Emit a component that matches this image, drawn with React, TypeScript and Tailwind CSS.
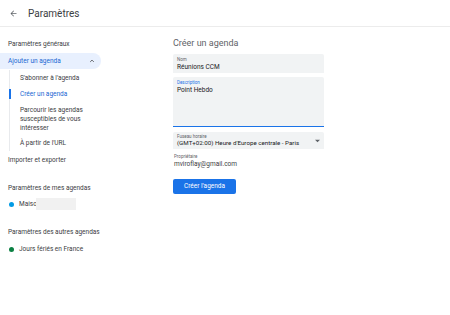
import React from "react";

export default function App() {
  const font = { fontFamily: "Roboto, 'Noto Sans', Arial, sans-serif" };
  return (
    <div className="w-[450px] h-[315px] bg-white text-[#3c4043] overflow-hidden" style={font}>
      <div className="h-[27px] border-b border-[#ececec] flex items-center pt-[1px]">
        <svg className="ml-[9px]" width="9" height="9" viewBox="0 0 24 24">
          <path d="M20 11H7.83l5.59-5.59L12 4l-8 8 8 8 1.41-1.41L7.83 13H20v-2z" fill="#5f6368" />
        </svg>
        <span className="ml-[10px] text-[10px] leading-none text-[#3c4043]">Paramètres</span>
      </div>
      <div className="flex">
        <div className="w-[112px] pt-[9px] text-[6.5px] leading-none">
          <div className="h-[16px] flex items-center pl-[8px]">Paramètres généraux</div>
          <div className="mt-[1px] w-[101px] h-[16px] flex items-center justify-between pl-[8px] pr-[6px] bg-[#e8f0fe] rounded-r-full text-[#1967d2]">
            <span>Ajouter un agenda</span>
            <svg width="6" height="6" viewBox="0 0 10 10">
              <path d="M2 6.5 L5 3.5 L8 6.5" fill="none" stroke="#5f6368" strokeWidth="1.6" />
            </svg>
          </div>
          <div className="ml-[9px] border-l border-[#e8eaed] mt-[1px]">
            <div className="h-[16px] flex items-center pl-[10px]">S'abonner à l'agenda</div>
            <div className="h-[16px] flex items-center pl-[10px] text-[#1967d2] relative">
              <div className="absolute left-[-1px] top-[3px] h-[10px] w-[1.5px] bg-[#1a73e8]" />
              Créer un agenda
            </div>
            <div className="pt-[4px] pb-[2px] pl-[10px] leading-[9px]">
              <div>Parcourir les agendas</div>
              <div>susceptibles de vous</div>
              <div>intéresser</div>
            </div>
            <div className="h-[16px] flex items-center pl-[10px]">À partir de l'URL</div>
          </div>
          <div className="mt-[1px] h-[16px] flex items-center pl-[8px]">Importer et exporter</div>
          <div className="mt-[12px] h-[16px] flex items-center pl-[8px]">Paramètres de mes agendas</div>
          <div className="h-[16px] flex items-center pl-[9px]">
            <span className="w-[5px] h-[5px] rounded-full bg-[#039be5]" />
            <span className="ml-[5px]">Maiso</span>
            <span className="ml-[-1px] w-[40px] h-[12px] bg-[#f1f1f1]" />
          </div>
          <div className="mt-[12px] h-[16px] flex items-center pl-[8px]">Paramètres des autres agendas</div>
          <div className="mt-[1px] h-[16px] flex items-center pl-[9px]">
            <span className="w-[5px] h-[5px] rounded-full bg-[#0b8043]" />
            <span className="ml-[5px]">Jours fériés en France</span>
          </div>
        </div>
        <div className="ml-[61px] pt-[8px] w-[151px]">
          <div className="h-[16px] flex items-center text-[9px] leading-none text-[#5f6368]">Créer un agenda</div>
          <div className="mt-[3px] h-[19px] bg-[#f1f3f4] rounded-t-[2px] pl-[4px] pt-[3px]">
            <div className="text-[4.5px] leading-[5px] text-[#5f6368]">Nom</div>
            <div className="text-[6.5px] leading-[8px] mt-[1px] text-[#202124]">Réunions CCM</div>
          </div>
          <div className="mt-[4px] h-[50px] bg-[#f1f3f4] rounded-t-[2px] pl-[4px] pt-[3px] border-b-[1.5px] border-[#1a73e8]">
            <div className="text-[4.5px] leading-[5px] text-[#1a73e8]">Description</div>
            <div className="text-[6.5px] leading-[8px] mt-[1px] text-[#202124]">Point Hebdo</div>
          </div>
          <div className="mt-[5px] h-[17px] bg-[#f1f3f4] rounded-t-[2px] pl-[4px] pr-[4px] pt-[2px] flex items-start justify-between">
            <div>
              <div className="text-[4.5px] leading-[5px] text-[#5f6368]">Fuseau horaire</div>
              <div className="text-[6.2px] leading-[8px] text-[#202124]">(GMT+02:00) Heure d'Europe centrale - Paris</div>
            </div>
            <svg className="mt-[5px]" width="5" height="4" viewBox="0 0 10 5">
              <path d="M0 0l5 5 5-5z" fill="#5f6368" />
            </svg>
          </div>
          <div className="mt-[5px] pl-[1px]">
            <div className="text-[4.5px] leading-[5px] text-[#5f6368]">Propriétaire</div>
            <div className="text-[6.5px] leading-[8px] mt-[1px] text-[#3c4043]">mviroflay@gmail.com</div>
          </div>
          <div className="mt-[11px] w-[63px] h-[15px] bg-[#1a73e8] rounded-[2px] flex items-center justify-center text-white text-[6.5px] leading-none">
            Créer l'agenda
          </div>
        </div>
      </div>
    </div>
  );
}
